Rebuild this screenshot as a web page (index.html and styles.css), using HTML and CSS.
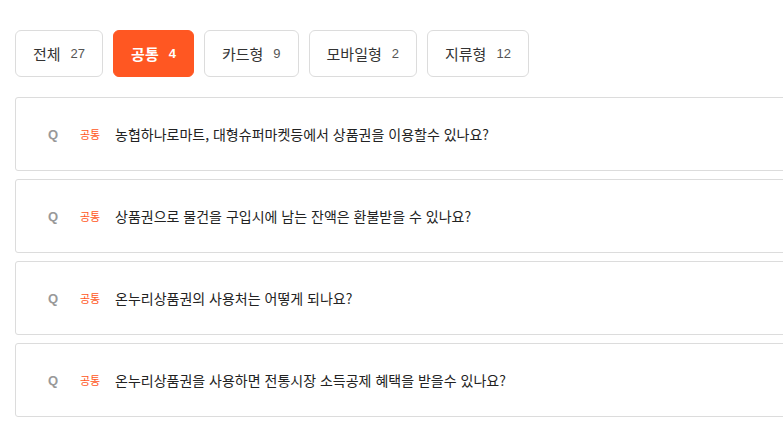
FILE: index.html
```html
<!DOCTYPE html>
<html lang="ko">
<head>
<meta charset="utf-8">
<link rel="stylesheet" href="styles.css">
</head>
<body>
<div class="page">
  <nav class="tabs">
    <button class="tab"><span class="tab-label">전체</span><span class="tab-count">27</span></button>
    <button class="tab tab-active"><span class="tab-label">공통</span><span class="tab-count">4</span></button>
    <button class="tab"><span class="tab-label">카드형</span><span class="tab-count">9</span></button>
    <button class="tab"><span class="tab-label">모바일형</span><span class="tab-count">2</span></button>
    <button class="tab"><span class="tab-label">지류형</span><span class="tab-count">12</span></button>
  </nav>
  <ul class="faq-list">
    <li class="faq-item"><span class="faq-q">Q</span><span class="faq-cat">공통</span><span class="faq-title">농협하나로마트, 대형슈퍼마켓등에서 상품권을 이용할수 있나요?</span></li>
    <li class="faq-item"><span class="faq-q">Q</span><span class="faq-cat">공통</span><span class="faq-title">상품권으로 물건을 구입시에 남는 잔액은 환불받을 수 있나요?</span></li>
    <li class="faq-item"><span class="faq-q">Q</span><span class="faq-cat">공통</span><span class="faq-title">온누리상품권의 사용처는 어떻게 되나요?</span></li>
    <li class="faq-item"><span class="faq-q">Q</span><span class="faq-cat">공통</span><span class="faq-title">온누리상품권을 사용하면 전통시장 소득공제 혜택을 받을수 있나요?</span></li>
  </ul>
</div>
</body>
</html>
```

FILE: styles.css
```css
html, body {
  margin: 0;
  padding: 0;
  overflow: hidden;
  background: #fff;
}
body {
  font-family: "Noto Sans CJK KR", "Noto Sans", sans-serif;
  color: #333;
}
.page {
  width: 1200px;
  padding: 30px 0 0 15px;
}
.tabs {
  display: flex;
  gap: 10px;
}
.tab {
  display: flex;
  align-items: center;
  gap: 10px;
  height: 47px;
  padding: 0 17px;
  border: 1px solid #dcdcdc;
  border-radius: 6px;
  background: #fff;
  font-family: inherit;
  cursor: pointer;
}
.tab-label {
  font-size: 15px;
  font-weight: 400;
  color: #333;
}
.tab-count {
  font-family: "Liberation Sans", Arial, sans-serif;
  font-size: 13px;
  color: #555;
}
.tab-active {
  background: #ff5722;
  border-color: #ff5722;
}
.tab-active .tab-label,
.tab-active .tab-count {
  color: #fff;
  font-weight: 700;
}
.faq-list {
  list-style: none;
  margin: 20px 0 0;
  padding: 0;
  display: flex;
  flex-direction: column;
  gap: 8px;
}
.faq-item {
  display: flex;
  align-items: center;
  height: 74px;
  box-sizing: border-box;
  border: 1px solid #dcdcdc;
  border-radius: 3px;
  padding-left: 32px;
}
.faq-q {
  width: 32px;
  font-family: "Liberation Sans", Arial, sans-serif;
  font-size: 13px;
  font-weight: 700;
  color: #999;
}
.faq-cat {
  width: 35px;
  font-size: 11px;
  color: #ff5722;
}
.faq-title {
  font-size: 14px;
  font-weight: 400;
  color: #222;
  margin-top: -1px;
}
```
